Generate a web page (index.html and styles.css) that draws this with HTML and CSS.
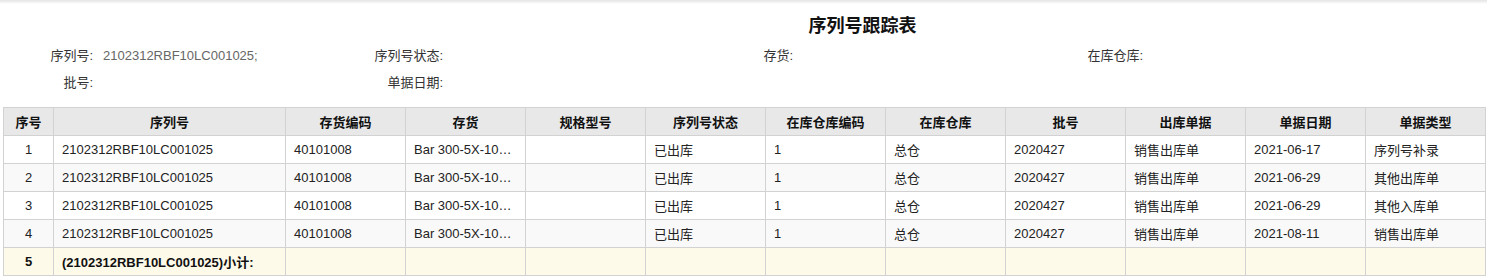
FILE: index.html
```html
<!DOCTYPE html>
<html lang="zh-CN">
<head>
<meta charset="utf-8">
<title>序列号跟踪表</title>
<link rel="stylesheet" href="styles.css">
</head>
<body>
<div class="topshade"></div>
<h1 class="title">序列号跟踪表</h1>
<div class="filters">
  <div class="field"><span class="label">序列号:</span><span class="value">2102312RBF10LC001025;</span></div>
  <div class="field"><span class="label">序列号状态:</span><span class="value"></span></div>
  <div class="field"><span class="label">存货:</span><span class="value"></span></div>
  <div class="field"><span class="label">在库仓库:</span><span class="value"></span></div>
  <div class="field"><span class="label">批号:</span><span class="value"></span></div>
  <div class="field"><span class="label">单据日期:</span><span class="value"></span></div>
</div>
<table class="grid">
  <colgroup>
    <col class="c-no"><col class="c-sn"><col class="c-w"><col class="c-w"><col class="c-w"><col class="c-w"><col class="c-w"><col class="c-w"><col class="c-w"><col class="c-w"><col class="c-w"><col class="c-w">
  </colgroup>
  <thead>
    <tr><th>序号</th><th>序列号</th><th>存货编码</th><th>存货</th><th>规格型号</th><th>序列号状态</th><th>在库仓库编码</th><th>在库仓库</th><th>批号</th><th>出库单据</th><th>单据日期</th><th>单据类型</th></tr>
  </thead>
  <tbody>
    <tr><td class="no">1</td><td>2102312RBF10LC001025</td><td>40101008</td><td>Bar 300-5X-10…</td><td></td><td>已出库</td><td>1</td><td>总仓</td><td>2020427</td><td>销售出库单</td><td>2021-06-17</td><td>序列号补录</td></tr>
    <tr><td class="no">2</td><td>2102312RBF10LC001025</td><td>40101008</td><td>Bar 300-5X-10…</td><td></td><td>已出库</td><td>1</td><td>总仓</td><td>2020427</td><td>销售出库单</td><td>2021-06-29</td><td>其他出库单</td></tr>
    <tr><td class="no">3</td><td>2102312RBF10LC001025</td><td>40101008</td><td>Bar 300-5X-10…</td><td></td><td>已出库</td><td>1</td><td>总仓</td><td>2020427</td><td>销售出库单</td><td>2021-06-29</td><td>其他入库单</td></tr>
    <tr><td class="no">4</td><td>2102312RBF10LC001025</td><td>40101008</td><td>Bar 300-5X-10…</td><td></td><td>已出库</td><td>1</td><td>总仓</td><td>2020427</td><td>销售出库单</td><td>2021-08-11</td><td>销售出库单</td></tr>
    <tr class="subtotal"><td class="no">5</td><td>(2102312RBF10LC001025)小计:</td><td></td><td></td><td></td><td></td><td></td><td></td><td></td><td></td><td></td><td></td></tr>
  </tbody>
</table>
</body>
</html>
```
FILE: styles.css
```css
html, body {
  margin: 0;
  padding: 0;
  background: #ffffff;
}
body {
  font-family: "Liberation Sans", Arial, "Noto Sans CJK SC", sans-serif;
  font-size: 13px;
  color: #222;
  width: 1487px;
  height: 277px;
  overflow: hidden;
}
.topshade {
  height: 4px;
  background: linear-gradient(#e4e4e4, #ffffff);
}
.title {
  margin: 10px 0 0 0;
  padding-left: 238px;
  height: 24px;
  line-height: 24px;
  font-size: 18px;
  font-weight: bold;
  text-align: center;
  color: #111;
}
.filters {
  margin: 4px 0 11px 3px;
  display: grid;
  grid-template-columns: repeat(4, 350px);
  grid-auto-rows: 27px;
}
.field {
  display: flex;
  align-items: center;
  line-height: 27px;
}
.label {
  width: 90px;
  text-align: right;
  color: #333;
}
.value {
  margin-left: 10px;
  color: #666;
}
.grid {
  margin-left: 3px;
  width: 1483px;
  table-layout: fixed;
  border-collapse: collapse;
}
.c-no { width: 50px; }
.c-sn { width: 232px; }
.c-w { width: 120px; }
.grid th, .grid td {
  border: 1px solid #d2d2d2;
  height: 27px;
  padding: 0 8px;
  white-space: nowrap;
}
.grid th {
  background: #e8e8e8;
  font-weight: bold;
  text-align: center;
  color: #111;
}
.grid td {
  text-align: left;
  color: #222;
}
.grid td.no {
  text-align: center;
  padding: 0;
}
.grid tbody tr:nth-child(even) td {
  background: #f9f9f9;
}
.grid tr.subtotal td {
  background: #fefaea;
  font-weight: bold;
  color: #111;
}
```
